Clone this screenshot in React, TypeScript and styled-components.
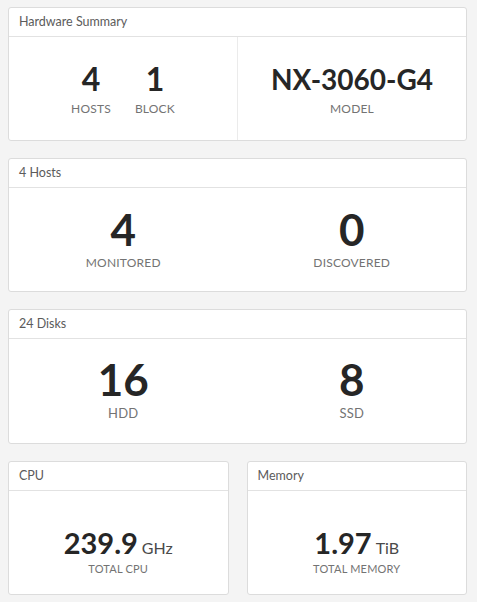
import React from "react";
import styled, { createGlobalStyle } from "styled-components";

const Global = createGlobalStyle`
  html, body { margin: 0; padding: 0; background: #f4f4f4; }
  body { font-family: Lato, "Noto Sans", "Liberation Sans", sans-serif; }
`;

const Page = styled.div`
  display: flex;
  flex-direction: column;
  gap: 17px;
  padding: 7px 10px 9px 8px;
  width: 459px;
`;

const Card = styled.section<{ $h: number; $grow?: boolean }>`
  background: #fff;
  border: 1px solid #dcdcdc;
  border-radius: 3px;
  display: flex;
  flex-direction: column;
  box-sizing: border-box;
  height: ${(p) => p.$h}px;
  flex: ${(p) => (p.$grow ? "1 1 0" : "none")};
  min-width: 0;
`;

const Header = styled.header`
  height: 29px;
  flex: none;
  box-sizing: border-box;
  border-bottom: 1px solid #e2e2e2;
  padding: 0 10px 1px;
  display: flex;
  align-items: center;
  font-size: 12.5px;
  color: #5b5b5b;
`;

const Body = styled.div`
  flex: 1;
  display: flex;
`;

const Half = styled.div<{ $divider?: boolean; $pt: number }>`
  flex: 1;
  display: flex;
  justify-content: center;
  align-items: flex-start;
  gap: 24px;
  padding-top: ${(p) => p.$pt}px;
  border-left: ${(p) => (p.$divider ? "1px solid #ebebeb" : "none")};
`;

const Stat = styled.div`
  display: flex;
  flex-direction: column;
  align-items: center;
`;

const Value = styled.div<{ $size: number; $gap: number }>`
  font-size: ${(p) => p.$size}px;
  line-height: 1;
  font-weight: 700;
  color: #262626;
  margin-bottom: ${(p) => p.$gap}px;
  white-space: nowrap;
`;

const Unit = styled.span`
  font-size: 16px;
  font-weight: 400;
  color: #4a4a4a;
  margin-left: 4px;
`;

const Label = styled.div<{ $size: number }>`
  font-size: ${(p) => p.$size}px;
  line-height: 1;
  color: #737373;
  letter-spacing: 0.2px;
  text-transform: uppercase;
  white-space: nowrap;
`;

const Row = styled.div`
  display: flex;
  gap: 18px;
`;

export default function App() {
  return (
    <>
      <Global />
      <Page>
        <Card $h={134}>
          <Header>Hardware Summary</Header>
          <Body>
            <Half $pt={26}>
              <Stat>
                <Value $size={32} $gap={8}>4</Value>
                <Label $size={12}>Hosts</Label>
              </Stat>
              <Stat>
                <Value $size={32} $gap={8}>1</Value>
                <Label $size={12}>Block</Label>
              </Stat>
            </Half>
            <Half $divider $pt={28}>
              <Stat>
                <Value $size={28} $gap={10}>NX-3060-G4</Value>
                <Label $size={12}>Model</Label>
              </Stat>
            </Half>
          </Body>
        </Card>
        <Card $h={134}>
          <Header>4 Hosts</Header>
          <Body>
            <Half $pt={19}>
              <Stat>
                <Value $size={44} $gap={6}>4</Value>
                <Label $size={12}>Monitored</Label>
              </Stat>
            </Half>
            <Half $pt={19}>
              <Stat>
                <Value $size={44} $gap={6}>0</Value>
                <Label $size={12}>Discovered</Label>
              </Stat>
            </Half>
          </Body>
        </Card>
        <Card $h={135}>
          <Header>24 Disks</Header>
          <Body>
            <Half $pt={18}>
              <Stat>
                <Value $size={44} $gap={6}>16</Value>
                <Label $size={13}>HDD</Label>
              </Stat>
            </Half>
            <Half $pt={18}>
              <Stat>
                <Value $size={44} $gap={6}>8</Value>
                <Label $size={13}>SSD</Label>
              </Stat>
            </Half>
          </Body>
        </Card>
        <Row>
          <Card $h={134} $grow>
            <Header>CPU</Header>
            <Body>
              <Half $pt={37}>
                <Stat>
                  <Value $size={29} $gap={6}>
                    239.9<Unit>GHz</Unit>
                  </Value>
                  <Label $size={11}>Total CPU</Label>
                </Stat>
              </Half>
            </Body>
          </Card>
          <Card $h={134} $grow>
            <Header>Memory</Header>
            <Body>
              <Half $pt={37}>
                <Stat>
                  <Value $size={29} $gap={6}>
                    1.97<Unit>TiB</Unit>
                  </Value>
                  <Label $size={11}>Total Memory</Label>
                </Stat>
              </Half>
            </Body>
          </Card>
        </Row>
      </Page>
    </>
  );
}
